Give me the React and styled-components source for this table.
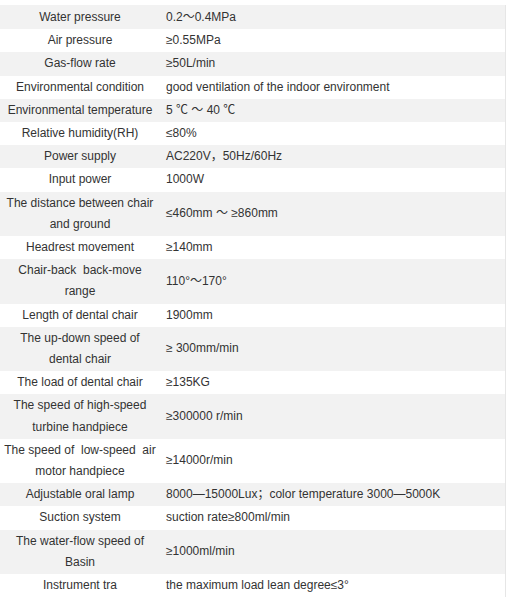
import React from "react";
import styled, { createGlobalStyle } from "styled-components";

const Global = createGlobalStyle`
  html, body { margin: 0; padding: 0; background: #ffffff; }
  body { font-family: "Liberation Sans", Arial, "Noto Sans CJK SC", sans-serif; }
`;

const Page = styled.div`
  padding-top: 5px;
  width: 506px;
`;

const Table = styled.table`
  width: 506px;
  border-collapse: collapse;
  border-spacing: 0;
  table-layout: fixed;
  border-right: 1px solid #e6e6e6;
  font-family: "Liberation Sans", Arial, "Noto Sans CJK SC", sans-serif;
  font-size: 12px;
  color: #333333;
`;

const Row = styled.tr`
  background: ${(p) => (p.$shade ? "#f2f2f2" : "#ffffff")};
`;

const Label = styled.td`
  width: 160px;
  padding: ${(p) => (p.$first ? "2px" : "1px")} 3px 1px 3px;
  line-height: 21.2px;
  text-align: center;
  vertical-align: middle;
  white-space: nowrap;
`;

const Value = styled.td`
  padding: ${(p) => (p.$first ? "2px" : "1px")} 4px 1px 6px;
  line-height: 21.2px;
  text-align: left;
  vertical-align: middle;
  white-space: nowrap;
`;

const rows = [
  [["Water pressure"], "0.2～0.4MPa"],
  [["Air pressure"], "≥0.55MPa"],
  [["Gas-flow rate"], "≥50L/min"],
  [["Environmental condition"], "good ventilation of the indoor environment"],
  [["Environmental temperature"], "5 ℃ ～ 40 ℃"],
  [["Relative humidity(RH)"], "≤80%"],
  [["Power supply"], "AC220V，50Hz/60Hz"],
  [["Input power"], "1000W"],
  [["The distance between chair", "and ground"], "≤460mm ～ ≥860mm"],
  [["Headrest movement"], "≥140mm"],
  [["Chair-back\u00a0 back-move", "range"], "110°～170°"],
  [["Length of dental chair"], "1900mm"],
  [["The up-down speed of", "dental chair"], "≥ 300mm/min"],
  [["The load of dental chair"], "≥135KG"],
  [["The speed of high-speed", "turbine handpiece"], "≥300000 r/min"],
  [["The speed of\u00a0 low-speed\u00a0 air", "motor handpiece"], "≥14000r/min"],
  [["Adjustable oral lamp"], "8000—15000Lux；color temperature 3000—5000K"],
  [["Suction system"], "suction rate≥800ml/min"],
  [["The water-flow speed of", "Basin"], "≥1000ml/min"],
  [["Instrument tra"], "the maximum load lean degree≤3°"],
];

export default function App() {
  return (
    <>
      <Global />
      <Page>
        <Table>
          <colgroup>
            <col style={{ width: "160px" }} />
            <col />
          </colgroup>
          <tbody>
            {rows.map(([label, value], i) => (
              <Row key={i} $shade={i % 2 === 0}>
                <Label $first={i === 0}>
                  {label.map((line, j) => (
                    <React.Fragment key={j}>
                      {j > 0 && <br />}
                      {line}
                    </React.Fragment>
                  ))}
                </Label>
                <Value $first={i === 0}>{value}</Value>
              </Row>
            ))}
          </tbody>
        </Table>
      </Page>
    </>
  );
}
